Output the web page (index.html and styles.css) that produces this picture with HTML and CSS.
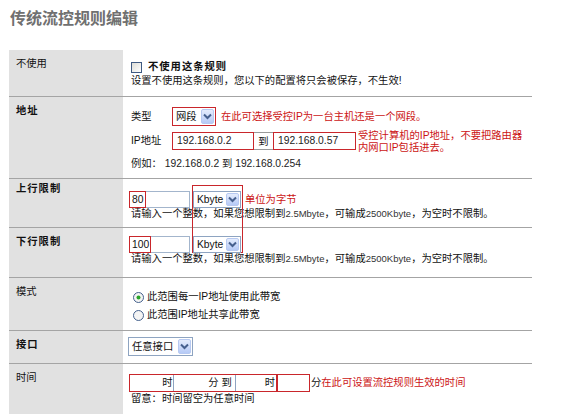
FILE: index.html
```html
<!DOCTYPE html>
<html lang="zh-CN">
<head>
<meta charset="UTF-8">
<meta name="viewport" content="width=device-width, initial-scale=1.0">
<title>传统流控规则编辑</title>
<link rel="stylesheet" href="styles.css">
</head>
<body>

  <h1 class="page-title">传统流控规则编辑</h1>

  <div class="rule-table">

    <!-- 不使用 -->
    <div class="rule-row row-disable">
      <div class="rule-label">不使用</div>
      <div class="rule-field">
        <div class="check-line"><span class="checkbox"></span><b>不使用这条规则</b></div>
        <div>设置不使用这条规则，您以下的配置将只会被保存，不生效!</div>
      </div>
    </div>

    <!-- 地址 -->
    <div class="rule-row row-addr">
      <div class="rule-label strong">地址</div>
      <div class="rule-field">
        <div class="addr-line type-line">
          <span class="field-name">类型</span>
          <span class="select marked sel-type">
            <span class="select-text">网段</span>
            <span class="select-btn"><svg width="9" height="7" viewBox="0 0 9 7"><path d="M1 1.5 L4.5 5 L8 1.5" fill="none" stroke="#46608e" stroke-width="2"/></svg></span>
          </span>
          <span class="note">在此可选择受控IP为一台主机还是一个网段。</span>
        </div>
        <div class="addr-line ip-line">
          <span class="field-name">IP地址</span>
          <span class="ip-range">
            <span class="text-box marked ip-from">192.168.0.2</span>
            <span class="ip-to">到</span>
            <span class="text-box marked ip-end">192.168.0.57</span>
          </span>
          <span class="note note-2line">受控计算机的IP地址，不要把路由器<br>内网口IP包括进去。</span>
        </div>
        <div class="example">例如： 192.168.0.2 到 192.168.0.254</div>
      </div>
    </div>

    <!-- 上行限制 -->
    <div class="rule-row row-up">
      <div class="rule-label strong">上行限制</div>
      <div class="rule-field">
        <div class="limit-line">
          <span class="num-box"><span class="num-mark">80</span></span>
          <span class="select sel-unit">
            <span class="select-text">Kbyte</span>
            <span class="select-btn"><svg width="9" height="7" viewBox="0 0 9 7"><path d="M1 1.5 L4.5 5 L8 1.5" fill="none" stroke="#46608e" stroke-width="2"/></svg></span>
          </span>
          <span class="note">单位为字节</span>
        </div>
        <div class="help">请输入一个整数，如果您想限制到<span class="unit">2.5Mbyte</span>，可输成<span class="unit">2500Kbyte</span>，为空时不限制。</div>
        <!-- 单位框跨上下行两行 -->
        <span class="unit-mark"></span>
      </div>
    </div>

    <!-- 下行限制 -->
    <div class="rule-row row-down">
      <div class="rule-label strong">下行限制</div>
      <div class="rule-field">
        <div class="limit-line">
          <span class="num-box"><span class="num-mark wide">100</span></span>
          <span class="select sel-unit">
            <span class="select-text">Kbyte</span>
            <span class="select-btn"><svg width="9" height="7" viewBox="0 0 9 7"><path d="M1 1.5 L4.5 5 L8 1.5" fill="none" stroke="#46608e" stroke-width="2"/></svg></span>
          </span>
        </div>
        <div class="help">请输入一个整数，如果您想限制到<span class="unit">2.5Mbyte</span>，可输成<span class="unit">2500Kbyte</span>，为空时不限制。</div>
      </div>
    </div>

    <!-- 模式 -->
    <div class="rule-row row-mode">
      <div class="rule-label">模式</div>
      <div class="rule-field">
        <div class="radio-line">
          <svg class="radio" width="11" height="11" viewBox="0 0 11 11"><circle cx="5.5" cy="5.5" r="5" fill="#f4f4f4" stroke="#45618c"/><circle cx="5.5" cy="5.5" r="2" fill="#2aa52a"/></svg>
          此范围每一IP地址使用此带宽
        </div>
        <div class="radio-line">
          <svg class="radio" width="11" height="11" viewBox="0 0 11 11"><circle cx="5.5" cy="5.5" r="5" fill="#f4f4f4" stroke="#45618c"/></svg>
          此范围IP地址共享此带宽
        </div>
      </div>
    </div>

    <!-- 接口 -->
    <div class="rule-row row-port">
      <div class="rule-label strong">接口</div>
      <div class="rule-field">
        <span class="select sel-port">
          <span class="select-text">任意接口</span>
          <span class="select-btn"><svg width="9" height="7" viewBox="0 0 9 7"><path d="M1 1.5 L4.5 5 L8 1.5" fill="none" stroke="#46608e" stroke-width="2"/></svg></span>
        </span>
      </div>
    </div>

    <!-- 时间 -->
    <div class="rule-row row-time">
      <div class="rule-label">时间</div>
      <div class="rule-field">
        <div class="time-set">
          <span class="time-group">
            <span class="time-input first"></span>
            <span class="time-unit">时</span>
            <span class="time-input"></span>
            <span class="time-unit to">分 到</span>
            <span class="time-input short"></span>
            <span class="time-unit end">时</span>
          </span>
          <span class="time-input marked"></span>
          <span class="time-tail">分</span>
          <span class="note note-time">在此可设置流控规则生效的时间</span>
        </div>
        <div>留意：时间留空为任意时间</div>
      </div>
    </div>

  </div>

</body>
</html>
```

FILE: styles.css
```css
body {
  margin: 0;
  padding: 7px 0 0 9px;
  font-family: "Liberation Sans", "Noto Sans CJK SC", sans-serif;
  font-size: 10.3px;
  line-height: 14px;
  color: #111;
  background: #fff;
}

.page-title {
  margin: 0 0 0 1px;
  height: 43px;
  font-family: "Noto Sans CJK SC", sans-serif;
  font-size: 16px;
  line-height: 20px;
  color: #707070;
}

/* rule table */
.rule-table {
  width: 523px;
}

.rule-row {
  display: grid;
  grid-template-columns: 114px 409px;
  box-sizing: border-box;
  border-bottom: 1px solid #a4a4a4;
}

.rule-label {
  background-color: #e1e1e1;
  padding: 7px 0 0 7px;
}

.rule-label.strong {
  font-weight: bold;
  letter-spacing: 1px;
}

.rule-field {
  position: relative;
  padding-left: 8px;
}

.row-disable { height: 47px; }
.row-addr    { height: 82px; }
.row-up      { height: 49px; }
.row-down    { height: 50px; }
.row-mode    { height: 53px; }
.row-port    { height: 33px; }
.row-time    { height: 50px; border-bottom: none; }

.row-up .rule-label { padding-top: 3px; }

.row-disable .rule-field { padding-top: 10px; }
.row-up .rule-field      { padding-top: 12px; }
.row-down .rule-field    { padding-top: 8px; }
.row-mode .rule-field    { padding-top: 10px; }
.row-port .rule-field    { padding-top: 6px; }
.row-time .rule-field    { padding-top: 10px; }

.note {
  color: #cc1414;
  white-space: nowrap;
}

/* 不使用 */
.check-line {
  display: flex;
  align-items: center;
  height: 14px;
}

.check-line b {
  letter-spacing: 1px;
}

.checkbox {
  width: 11px;
  height: 11px;
  box-sizing: border-box;
  margin-right: 6px;
  border: 1px solid #3f5a82;
  background: linear-gradient(135deg, #dcdcd6, #ffffff);
}

/* select boxes */
.select {
  display: inline-flex;
  align-items: center;
  box-sizing: border-box;
  border: 1px solid #8ea4c1;
  background: #fff;
}

.select-text {
  flex: 1;
  padding-left: 3px;
  white-space: nowrap;
}

.select-btn {
  display: flex;
  align-items: center;
  justify-content: center;
  box-sizing: border-box;
  width: 13px;
  margin: 1px;
  align-self: stretch;
  border: 1px solid #b7c9f1;
  border-radius: 2px;
  background: linear-gradient(#e4ecfd, #b6caf6);
}

.marked {
  border: 1px solid #c9262b !important;
}

.sel-type { width: 44px; height: 19px; }
.sel-unit { width: 48px; height: 17px; margin-left: 3px; }
.sel-port { width: 65px; height: 19px; margin-left: -3px; }

/* 地址 */
.addr-line {
  display: flex;
}

.type-line {
  align-items: center;
  height: 19px;
  margin-top: 10px;
}

.type-line .note {
  margin-left: 5px;
}

.ip-line {
  align-items: flex-start;
  height: 18px;
  margin-top: 6px;
}

.field-name {
  width: 41px;
  line-height: 18px;
  flex-shrink: 0;
}

.ip-range {
  display: flex;
  height: 18px;
}

.text-box {
  box-sizing: border-box;
  height: 18px;
  padding-left: 4px;
  line-height: 16px;
  border: 1px solid #8ea4c1;
  color: #222;
}

.ip-from { width: 82px; }
.ip-end  { width: 83px; }

.ip-to {
  box-sizing: border-box;
  width: 19px;
  height: 18px;
  line-height: 17px;
  text-align: center;
  border-top: 1px solid #9a9a9a;
  border-bottom: 1px solid #9a9a9a;
}

.note-2line {
  margin: -2px 0 0 2px;
  line-height: 12px;
}

.example {
  margin-top: 7px;
  color: #222;
}

/* 上行 / 下行限制 */
.limit-line {
  display: flex;
  align-items: center;
  height: 17px;
}

.limit-line .note {
  margin-left: 4px;
}

.num-box {
  display: flex;
  box-sizing: border-box;
  width: 61px;
  height: 17px;
  margin-left: -2px;
  border: 1px solid #a3b5cc;
}

.num-mark {
  box-sizing: border-box;
  width: 17px;
  height: 17px;
  margin: -1px 0 0 -1px;
  padding-left: 2px;
  line-height: 15px;
  border: 1px solid #c9262b;
}

.num-mark.wide {
  width: 22px;
}

.help {
  line-height: 12px;
}

.help .unit {
  font-size: 9.5px;
  color: #333;
}

.unit-mark {
  position: absolute;
  left: 69px;
  top: 6px;
  width: 51px;
  height: 68px;
  box-sizing: border-box;
  border: 1px solid #c9262b;
  pointer-events: none;
}

/* 模式 */
.radio-line {
  display: flex;
  align-items: center;
  height: 18px;
  margin-left: 2px;
  white-space: nowrap;
}

.radio {
  margin-right: 3px;
}

/* 时间 */
.time-set {
  display: flex;
  height: 18px;
  margin-left: -2px;
}

.time-group {
  display: flex;
  box-sizing: border-box;
  width: 148px;
  height: 18px;
  border: 1px solid #c9262b;
}

.time-input {
  box-sizing: border-box;
  width: 32px;
  height: 16px;
  border-left: 1px solid #8ea4c1;
}

.time-input.first {
  border-left: none;
}

.time-input.short {
  width: 29px;
}

.time-input.marked {
  width: 33px;
  height: 18px;
}

.time-unit {
  width: 11px;
  line-height: 16px;
  text-align: center;
}

.time-unit.to {
  width: 30px;
}

.time-unit.end {
  width: 12px;
}

.time-tail {
  line-height: 18px;
  margin-left: 1px;
}

.note-time {
  line-height: 18px;
}
```
